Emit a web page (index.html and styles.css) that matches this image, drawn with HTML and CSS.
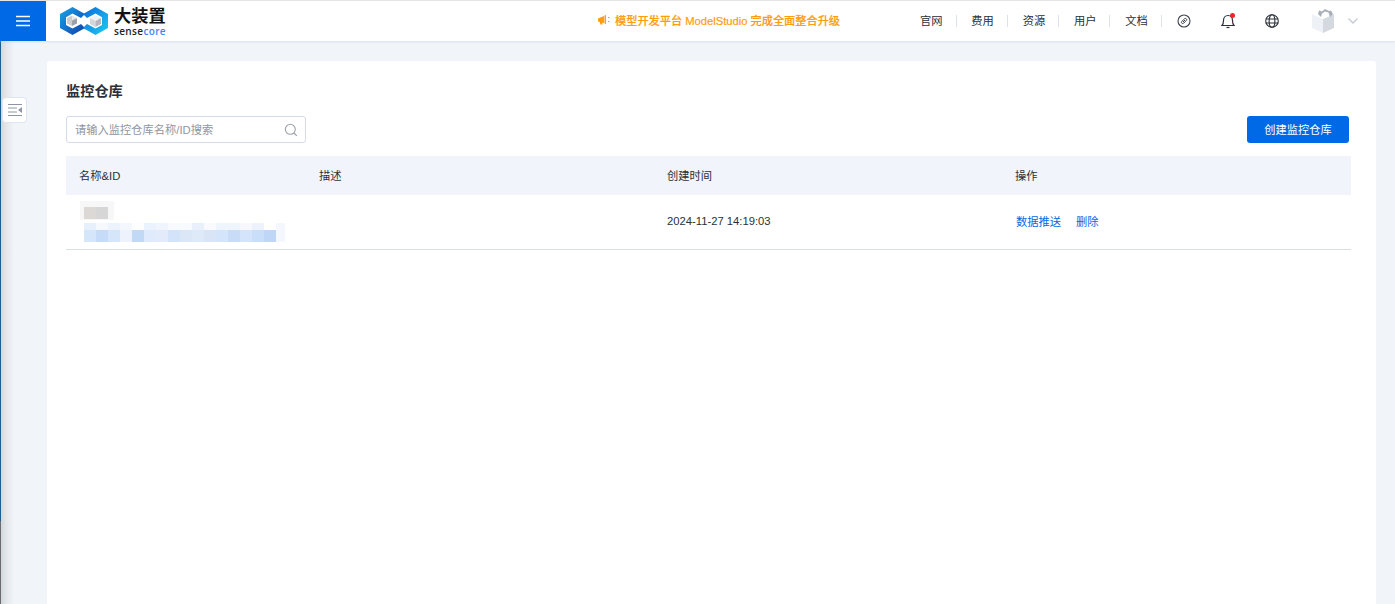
FILE: index.html
```html
<!DOCTYPE html>
<html lang="zh-CN">
<head>
<meta charset="utf-8">
<title>监控仓库</title>
<link rel="stylesheet" href="styles.css">
</head>
<body>
<header class="topbar">
  <button class="menu-btn" aria-label="菜单">
    <svg width="16" height="12" viewBox="0 0 16 12"><path d="M1 1.500h14M1 6h14M1 10.500h14" stroke="#fff" stroke-width="1.400" fill="none"/></svg>
  </button>
  <div class="logo">
    <svg class="logo-mark" width="48" height="30" viewBox="0 0 48 30">
      <defs>
        <linearGradient id="lg1" x1="0" y1="0" x2="1" y2="1"><stop offset="0" stop-color="#18a5ee"/><stop offset="1" stop-color="#0f3fa8"/></linearGradient>
        <linearGradient id="lg2" x1="0" y1="0" x2="1" y2="1"><stop offset="0" stop-color="#1066d8"/><stop offset="1" stop-color="#18d0f4"/></linearGradient>
      </defs>
      <path d="M12.500 1 25 8 21 12 12.500 7.500 6 11.200V19L12.500 22.600 21 18 25 22 12.500 29 0 22V8Z" fill="url(#lg1)"/>
      <path d="M35.500 1 48 8V22L35.500 29 23 22 27 18 35.500 22.600 42 19V11.200L35.500 7.500 27 12 23 8Z" fill="url(#lg2)"/>
      <path d="M7 12 12 9.500V20L7 17.500Z" fill="#c9cdd2"/><path d="M12 9.500 17 12 12 14.500Z" fill="#e6e8ea"/><path d="M12 14.500 17 12V17.500L12 20Z" fill="#9da2a8"/>
      <path d="M30 12 35.500 9 41 12 35.500 15Z" fill="#f0f1f2"/><path d="M30 12 35.500 15V21L30 18Z" fill="#d4d7da"/><path d="M41 12 35.500 15V21L41 18Z" fill="#b4b8bd"/>
    </svg>
    <div class="logo-text">
      <span class="logo-cn">大装置</span>
      <span class="logo-en">sense<span class="logo-en-accent">core</span></span>
    </div>
  </div>
  <div class="promo">
    <svg class="promo-icon" width="14" height="12" viewBox="0 0 14 12"><path d="M1 4.500 7 2V9L1 7.500Z M7.500 1.500 9 1V10L7.500 9.500Z M2.500 7.500H5L5.500 10.500H3.500Z" fill="#ff9d0a"/><path d="M11 3.500h1.500M11 7.500h1.500" stroke="#ff9d0a" stroke-width="1.200"/></svg>
    <span>模型开发平台 ModelStudio 完成全面整合升级</span>
  </div>
  <nav class="nav">
    <a class="nav-item">官网</a><a class="nav-item">费用</a><a class="nav-item">资源</a><a class="nav-item">用户</a><a class="nav-item">文档</a>
  </nav>
  <div class="tools">
    <svg class="tool tool-link" width="14" height="14" viewBox="0 0 14 14" fill="none" stroke="#3d4450"><circle cx="7" cy="7" r="6" stroke-width="1.100"/><path d="M5.800 6.200 4.800 7.500A1.200 1.200 0 0 0 6.500 9.200L8 8M8.200 7.800 9.300 6.500A1.200 1.200 0 0 0 7.500 4.800L6.200 6M6 8 8 6" stroke-width="1"/></svg>
    <span class="bell">
      <svg width="16" height="16" viewBox="0 0 16 16" fill="none" stroke="#2b3038" stroke-width="1.200"><path d="M2 12.500H14C12.500 11 12.500 9.500 12.500 7.500C12.500 4.500 10.500 2.500 8 2.500C5.500 2.500 3.500 4.500 3.500 7.500C3.500 9.500 3.500 11 2 12.500Z"/><path d="M6.500 14.500H9.500"/></svg>
      <i class="bell-dot"></i>
    </span>
    <svg class="tool tool-globe" width="14" height="14" viewBox="0 0 14 14" fill="none" stroke="#2b3038" stroke-width="1.100"><circle cx="7" cy="7" r="6.300"/><ellipse cx="7" cy="7" rx="2.900" ry="6.300"/><path d="M.7 5H13.300M.7 9H13.300"/></svg>
    <svg class="avatar" width="24" height="26" viewBox="0 0 24 26"><path d="M1 6 12 11V25L1 20Z" fill="#eef1f5"/><path d="M12 11 23 6V20L12 25Z" fill="#d4d9e0"/><path d="M1 6 6 3 8 1 10 3 14 0 18 2 20 1 23 6 12 11Z" fill="#fff"/><path d="M7 6 8 2.500 11 3.500 14 1 18 3 20 2.500 22 6 19 9 17.500 4.500 14 3.500 11 5.500 10 9Z" fill="#a9b0ba"/></svg>
    <svg class="chevron" width="12" height="8" viewBox="0 0 12 8"><path d="M1.500 1.500 6 6 10.500 1.500" fill="none" stroke="#c3c9d3" stroke-width="1.300"/></svg>
  </div>
</header>

<div class="page">
  <button class="side-toggle" aria-label="展开">
    <svg width="16" height="14" viewBox="0 0 16 14"><path d="M1 1.500H15M1 5H10M1 9H10M1 12.500H15" stroke="#8d95a3" stroke-width="1.200"/><path d="M15 4V10L11 7Z" fill="#8d95a3"/></svg>
  </button>
  <main class="card">
    <h1 class="title">监控仓库</h1>
    <div class="toolbar">
      <div class="search">
        <span class="search-placeholder">请输入监控仓库名称/ID搜索</span>
        <svg width="14" height="14" viewBox="0 0 14 14" fill="none" stroke="#9aa1ab" stroke-width="1.100"><circle cx="6.300" cy="6.300" r="5"/><path d="M10 10 12.800 12.800"/></svg>
      </div>
      <button class="primary-btn">创建监控仓库</button>
    </div>
    <div class="table">
      <div class="row row-head">
        <div class="cell">名称&amp;ID</div>
        <div class="cell">描述</div>
        <div class="cell">创建时间</div>
        <div class="cell">操作</div>
      </div>
      <div class="row row-body">
        <div class="cell cell-name">
          <div class="mosaic-name"></div>
          <div class="mosaic-id"></div>
        </div>
        <div class="cell"></div>
        <div class="cell">2024-11-27 14:19:03</div>
        <div class="cell cell-actions"><a class="link">数据推送</a><a class="link">删除</a></div>
      </div>
    </div>
  </main>
</div>
</body>
</html>
```
FILE: styles.css
```css
* { box-sizing: border-box; }
html, body { margin: 0; height: 100%; overflow: hidden; }
body {
  font-family: "Liberation Sans", "Noto Sans CJK SC", sans-serif;
  font-size: 11.25px;
  color: #2b3038;
  background: #f1f4f9;
  border-top: 1px solid #e4e5e7;
}
.topbar {
  display: flex;
  align-items: center;
  height: 40px;
  background: #fff;
  box-shadow: 0 1px 2px rgba(190, 200, 220, .45);
  position: relative;
  z-index: 2;
}
.menu-btn {
  width: 46px;
  height: 40px;
  border: 0;
  padding: 0;
  background: #0069e6;
  display: flex;
  align-items: center;
  justify-content: center;
}
.logo { display: flex; align-items: center; gap: 6px; margin-left: 14px; width: 106px; }
.logo-mark { flex: none; }
.logo-text { display: flex; flex-direction: column; line-height: 1; }
.logo-cn { font-size: 17.2px; font-weight: 700; color: #111; line-height: 19px; white-space: nowrap; }
.logo-en { font-size: 10px; letter-spacing: .35px; color: #222; line-height: 10px; font-weight: 600; font-family: "Open Sans", sans-serif; }
.logo-en-accent { color: #3f86f2; }
.promo {
  display: flex;
  align-items: center;
  gap: 4px;
  margin-left: 431px;
  width: 243px;
  padding-bottom: 2px;
  color: #ff9d0a;
  font-size: 11.2px;
  font-weight: 500;
  white-space: nowrap;
  -webkit-text-stroke: .2px #ff9d0a;
}
.promo-icon { flex: none; }
.nav { display: flex; gap: 14.8px; margin-left: 80px; }
.nav-item {
  flex: none;
  line-height: 12px;
  padding-right: 13px;
  border-right: 1px solid #dbe2ec;
  white-space: nowrap;
}
.tools { display: flex; align-items: center; margin-left: 15px; }
.bell { position: relative; display: flex; margin-left: 29px; }
.bell-dot {
  position: absolute;
  top: 0;
  right: 1px;
  width: 5px;
  height: 5px;
  border-radius: 50%;
  background: #f5222d;
}
.tool-globe { margin-left: 29px; }
.avatar { margin-left: 32px; }
.chevron { margin-left: 12px; }

.page {
  position: relative;
  height: calc(100% - 40px);
  padding: 20px 19px 0 47px;
  background:
    linear-gradient(#1d5f8e, #1d5f8e) 0 0 / 1px 480px no-repeat,
    linear-gradient(#6a6c72, #6a6c72) 0 480px / 1px 100% no-repeat,
    linear-gradient(90deg, #d3d8dd 1px, #e2e7ea 6px, #f1f4f9 14px);
}
.side-toggle {
  position: absolute;
  left: 2px;
  top: 56px;
  width: 25px;
  height: 26px;
  padding: 0;
  display: flex;
  align-items: center;
  justify-content: center;
  background: #fff;
  border: 1px solid #dfe4f0;
  border-radius: 4px;
}
.card {
  height: 100%;
  background: #fff;
  border-radius: 3px 3px 0 0;
  padding: 21px 25px 0 19px;
}
.title {
  margin: 0 0 16px;
  font-size: 14.2px;
  line-height: 18px;
  font-weight: 700;
  color: #2b3038;
}
.toolbar {
  display: flex;
  justify-content: space-between;
  align-items: center;
  padding-right: 2px;
  margin-bottom: 13px;
}
.search {
  width: 240px;
  height: 27px;
  display: flex;
  align-items: center;
  justify-content: space-between;
  padding: 0 7px 0 8px;
  border: 1px solid #d3dbe9;
  border-radius: 3px;
}
.search-placeholder { color: #8f96a3; padding-bottom: 2px; }
.primary-btn {
  width: 102px;
  height: 27px;
  border: 0;
  border-radius: 3px;
  background: #0069e6;
  color: #fff;
  font: inherit;
  padding: 0 0 2px;
}
.row {
  display: grid;
  grid-template-columns: 240px 348px 348px 1fr;
  align-items: center;
}
.row-head { height: 39px; background: #f1f4fb; }
.row-body { height: 55px; border-bottom: 1px solid #d9dee9; }
.cell { padding: 0 0 2px 13px; }
.cell-name { padding: 0 0 0 14px; display: flex; flex-direction: column; }
.cell-actions { padding-left: 14px; display: flex; gap: 15px; }
.link { color: #0069e6; }
.mosaic-name {
  width: 34px;
  height: 19px;
  margin-top: -1px;
  background:
    linear-gradient(90deg, transparent 4px, #dcd8d5 4px, #dcd8d5 16px, #d5d6d5 16px, #d5d6d5 28px, transparent 28px) 0 6px / 100% 12px no-repeat,
    #f7f7f7;
}
.mosaic-id {
  width: 205px;
  height: 19px;
  margin-top: 3px;
  background:
    linear-gradient(90deg, transparent 4px, #d6e6fa 4px, #d6e6fa 16px, #c5dbf8 16px, #c5dbf8 28px, #d6e6fa 28px, #d6e6fa 40px, #edf2fc 40px, #edf2fc 52px, #c2d9f6 52px, #c2d9f6 64px, #dfebfc 64px, #dfebfc 76px, #e3ebfa 76px, #e3ebfa 88px, #d2e3fa 88px, #d2e3fa 100px, #dbe7f7 100px, #dbe7f7 112px, #dfeaf9 112px, #dfeaf9 124px, #d9e5f7 124px, #d9e5f7 136px, #d4e4fa 136px, #d4e4fa 148px, #c8dcf8 148px, #c8dcf8 160px, #d4e4fa 160px, #d4e4fa 172px, #c9def9 172px, #c9def9 184px, #c0d6f6 184px, #c0d6f6 196px, #f4f7fd 196px, #f4f7fd 205px) 0 7px / 100% 12px no-repeat,
    linear-gradient(90deg, transparent 4px, #e6f0fd 4px, #e6f0fd 16px, #f5f9fe 16px, #f5f9fe 28px, #edf3fd 28px, #edf3fd 40px, #f4f7fd 40px, #f4f7fd 52px, #fdfdfe 52px, #fdfdfe 64px, #e9f2fd 64px, #e9f2fd 76px, #f0f4fd 76px, #f0f4fd 88px, #f7fafe 88px, #f7fafe 112px, #e9f0fc 112px, #e9f0fc 124px, #f8fafe 124px, #f8fafe 136px, #eff5fd 136px, #eff5fd 160px, #f6f8fd 160px, #f6f8fd 172px, #ecf3fd 172px, #ecf3fd 184px, #fff 184px, #fff 196px, #f4f7fd 196px, #f4f7fd 205px) 0 0 / 100% 7px no-repeat;
}
```
